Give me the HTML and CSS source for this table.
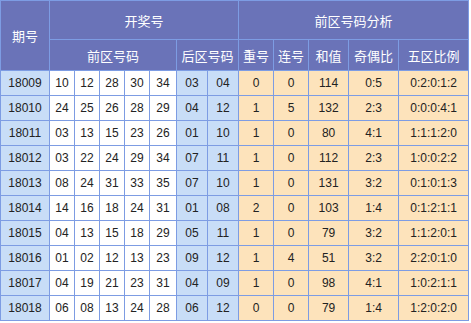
FILE: index.html
```html
<!DOCTYPE html>
<html>
<head>
<meta charset="utf-8">
<link rel="stylesheet" href="styles.css">
</head>
<body>
<table class="draw">
  <colgroup>
    <col style="width:49px"><col style="width:25px"><col style="width:25px"><col style="width:25px"><col style="width:25px"><col style="width:27px"><col style="width:31px"><col style="width:31px"><col style="width:35px"><col style="width:35px"><col style="width:40px"><col style="width:50px"><col style="width:70px">
  </colgroup>
  <thead>
    <tr class="h1">
      <th rowspan="2">期号</th>
      <th colspan="7">开奖号</th>
      <th colspan="5">前区号码分析</th>
    </tr>
    <tr class="h2">
      <th colspan="5">前区号码</th>
      <th colspan="2">后区号码</th>
      <th>重号</th><th>连号</th><th>和值</th><th>奇偶比</th><th>五区比例</th>
    </tr>
  </thead>
  <tbody>
    <tr><td class="b">18009</td><td>10</td><td>12</td><td>28</td><td>30</td><td>34</td><td class="b">03</td><td class="b">04</td><td class="p">0</td><td class="p">0</td><td class="p">114</td><td class="p">0:5</td><td class="p">0:2:0:1:2</td></tr>
    <tr><td class="b">18010</td><td>24</td><td>25</td><td>26</td><td>28</td><td>29</td><td class="b">04</td><td class="b">12</td><td class="p">1</td><td class="p">5</td><td class="p">132</td><td class="p">2:3</td><td class="p">0:0:0:4:1</td></tr>
    <tr><td class="b">18011</td><td>03</td><td>13</td><td>15</td><td>23</td><td>26</td><td class="b">01</td><td class="b">10</td><td class="p">1</td><td class="p">0</td><td class="p">80</td><td class="p">4:1</td><td class="p">1:1:1:2:0</td></tr>
    <tr><td class="b">18012</td><td>03</td><td>22</td><td>24</td><td>29</td><td>34</td><td class="b">07</td><td class="b">11</td><td class="p">1</td><td class="p">0</td><td class="p">112</td><td class="p">2:3</td><td class="p">1:0:0:2:2</td></tr>
    <tr><td class="b">18013</td><td>08</td><td>24</td><td>31</td><td>33</td><td>35</td><td class="b">07</td><td class="b">10</td><td class="p">1</td><td class="p">0</td><td class="p">131</td><td class="p">3:2</td><td class="p">0:1:0:1:3</td></tr>
    <tr><td class="b">18014</td><td>14</td><td>16</td><td>18</td><td>24</td><td>31</td><td class="b">01</td><td class="b">08</td><td class="p">2</td><td class="p">0</td><td class="p">103</td><td class="p">1:4</td><td class="p">0:1:2:1:1</td></tr>
    <tr><td class="b">18015</td><td>04</td><td>13</td><td>15</td><td>18</td><td>29</td><td class="b">05</td><td class="b">11</td><td class="p">1</td><td class="p">0</td><td class="p">79</td><td class="p">3:2</td><td class="p">1:1:2:0:1</td></tr>
    <tr><td class="b">18016</td><td>01</td><td>02</td><td>12</td><td>13</td><td>23</td><td class="b">09</td><td class="b">12</td><td class="p">1</td><td class="p">4</td><td class="p">51</td><td class="p">3:2</td><td class="p">2:2:0:1:0</td></tr>
    <tr><td class="b">18017</td><td>04</td><td>19</td><td>21</td><td>23</td><td>31</td><td class="b">04</td><td class="b">09</td><td class="p">1</td><td class="p">0</td><td class="p">98</td><td class="p">4:1</td><td class="p">1:0:2:1:1</td></tr>
    <tr><td class="b">18018</td><td>06</td><td>08</td><td>13</td><td>24</td><td>28</td><td class="b">06</td><td class="b">12</td><td class="p">0</td><td class="p">0</td><td class="p">79</td><td class="p">1:4</td><td class="p">1:2:0:2:0</td></tr>
  </tbody>
</table>
</body>
</html>
```
FILE: styles.css
```css
html, body {
  margin: 0;
  padding: 0;
  background: #ffffff;
}
.draw {
  border-collapse: collapse;
  table-layout: fixed;
  width: 468px;
  font-family: "Liberation Sans", Arial, "Noto Sans CJK SC", sans-serif;
  font-size: 12px;
  color: #222;
}
.draw th, .draw td {
  border: 1px solid #7d9ce3;
  padding: 0;
  text-align: center;
  overflow: hidden;
  white-space: nowrap;
}
.draw th {
  background: #6a73b8;
  color: #fff;
  font-weight: normal;
  font-family: "Noto Sans CJK SC", sans-serif;
  font-size: 13px;
}
.h1 th { height: 38px; }
.h2 th { height: 30px; }
.draw td { height: 24px; background: #fff; }
.draw td.b { background: #c8ddf7; }
.draw td.p { background: #fde3bb; }
```
